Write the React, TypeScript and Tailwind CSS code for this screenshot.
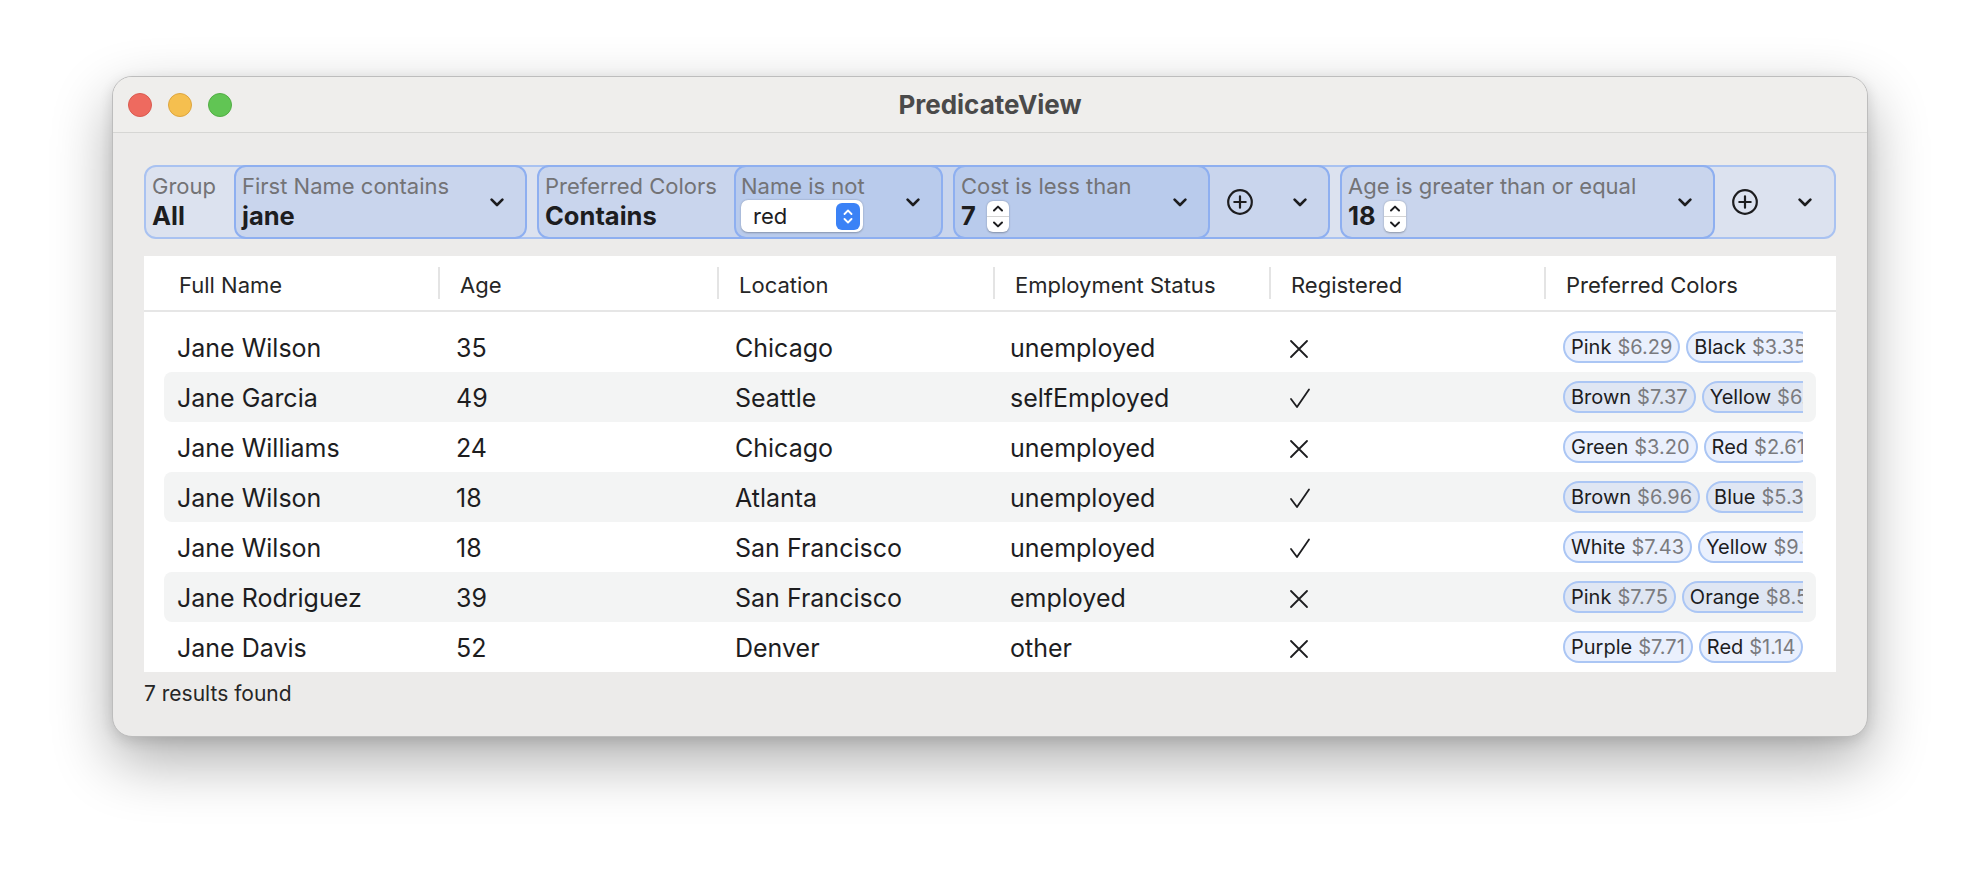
import React from "react";

const Chevron = () => (
  <svg width="14" height="9" viewBox="0 0 14 9" className="shrink-0">
    <path d="M1.6 1.6 L7 7 L12.4 1.6" fill="none" stroke="#1d1d1f" strokeWidth="2.6" strokeLinecap="round" strokeLinejoin="round" />
  </svg>
);

const PlusCircle = () => (
  <svg width="26" height="26" viewBox="0 0 26 26" className="shrink-0">
    <circle cx="13" cy="13" r="11.8" fill="none" stroke="#1d1d1f" strokeWidth="2.2" />
    <path d="M13 7.3 V18.7 M7.3 13 H18.7" stroke="#1d1d1f" strokeWidth="2.2" strokeLinecap="round" />
  </svg>
);

const Stepper = () => (
  <div className="flex h-[31px] w-[22px] shrink-0 flex-col items-center justify-between rounded-[6px] bg-white py-[4px] shadow-[0_0.5px_2px_rgba(0,0,0,0.3)]">
    <svg width="12" height="7" viewBox="0 0 12 7">
      <path d="M2 5.5 L6 1.6 L10 5.5" fill="none" stroke="#1d1d1f" strokeWidth="2" strokeLinecap="round" strokeLinejoin="round" />
    </svg>
    <div className="h-[1px] w-full bg-[#d4d4d4]" />
    <svg width="12" height="7" viewBox="0 0 12 7">
      <path d="M2 1.5 L6 5.4 L10 1.5" fill="none" stroke="#1d1d1f" strokeWidth="2" strokeLinecap="round" strokeLinejoin="round" />
    </svg>
  </div>
);

const Trailing = () => (
  <div className="flex w-[118px] shrink-0 items-center pl-[17px]">
    <PlusCircle />
    <div className="ml-[40px]">
      <Chevron />
    </div>
  </div>
);

const Label = ({ children }: { children: React.ReactNode }) => (
  <div className="whitespace-nowrap text-[22px] leading-[28px] text-[#737376]">{children}</div>
);

const Value = ({ children }: { children: React.ReactNode }) => (
  <div className="flex h-[32px] items-center whitespace-nowrap text-[25.5px] font-bold leading-[32px] text-[#1d1d1f]">{children}</div>
);

const XMark = () => (
  <svg width="20" height="20" viewBox="0 0 20 20">
    <path d="M2 2 L18 18 M18 2 L2 18" stroke="#1d1d1f" strokeWidth="1.8" strokeLinecap="round" />
  </svg>
);

const CheckMark = () => (
  <svg width="22" height="21" viewBox="0 0 22 21">
    <path d="M2 11 L8 19 L20 1.5" fill="none" stroke="#1d1d1f" strokeWidth="1.8" strokeLinecap="round" strokeLinejoin="round" />
  </svg>
);

type Row = {
  name: string;
  age: number;
  loc: string;
  status: string;
  reg: boolean;
  chips: [string, string][];
};

const rows: Row[] = [
  { name: "Jane Wilson", age: 35, loc: "Chicago", status: "unemployed", reg: false, chips: [["Pink", "$6.29"], ["Black", "$3.35"]] },
  { name: "Jane Garcia", age: 49, loc: "Seattle", status: "selfEmployed", reg: true, chips: [["Brown", "$7.37"], ["Yellow", "$6.12"]] },
  { name: "Jane Williams", age: 24, loc: "Chicago", status: "unemployed", reg: false, chips: [["Green", "$3.20"], ["Red", "$2.61"]] },
  { name: "Jane Wilson", age: 18, loc: "Atlanta", status: "unemployed", reg: true, chips: [["Brown", "$6.96"], ["Blue", "$5.31"]] },
  { name: "Jane Wilson", age: 18, loc: "San Francisco", status: "unemployed", reg: true, chips: [["White", "$7.43"], ["Yellow", "$9.14"]] },
  { name: "Jane Rodriguez", age: 39, loc: "San Francisco", status: "employed", reg: false, chips: [["Pink", "$7.75"], ["Orange", "$8.56"]] },
  { name: "Jane Davis", age: 52, loc: "Denver", status: "other", reg: false, chips: [["Purple", "$7.71"], ["Red", "$1.14"]] },
];

const Chip = ({ name, price }: { name: string; price: string }) => (
  <div className="flex h-[32px] shrink-0 items-center whitespace-nowrap rounded-full border-2 border-[#abc6f4] bg-[rgba(80,130,240,0.12)] px-[6px] text-[20px] leading-none">
    <span className="text-[#1d1d1f]">{name}</span>
    <span className="ml-[6px] text-[#7a7b7f]">{price}</span>
  </div>
);

const HeaderCell = ({ w, children }: { w: string; children: React.ReactNode }) => (
  <div className={`flex h-full shrink-0 items-center ${w}`}>
    <div className="h-[32px] w-[2px] bg-[#e4e4e4]" />
    <div className="ml-[20px] whitespace-nowrap pt-[4px]">{children}</div>
  </div>
);

export default function App() {
  return (
    <div className="h-[886px] w-[1980px] overflow-hidden bg-white pl-[112px] pt-[76px] font-[Inter,'Noto_Sans',sans-serif] text-[#1d1d1f]">
      <div className="flex h-[661px] w-[1756px] flex-col overflow-hidden rounded-[20px] border border-[#bdbdbd] bg-[#ecebea] shadow-[0_24px_60px_rgba(0,0,0,0.32),0_4px_14px_rgba(0,0,0,0.12)]">
        {/* Title bar */}
        <div className="grid h-[56px] shrink-0 grid-cols-[1fr_auto_1fr] items-center border-b border-[#d6d6d4] bg-[#efeeec]">
          <div className="flex items-center gap-[16px] pl-[15px]">
            <div className="h-[24px] w-[24px] rounded-full border border-[#d95a50] bg-[#ee6a5f]" />
            <div className="h-[24px] w-[24px] rounded-full border border-[#dda53f] bg-[#f5bf4f]" />
            <div className="h-[24px] w-[24px] rounded-full border border-[#52ad45] bg-[#61c554]" />
          </div>
          <div className="text-[26px] font-bold text-[#4a4a4a]">PredicateView</div>
          <div />
        </div>

        {/* Content */}
        <div className="flex flex-1 flex-col px-[31px] pt-[32px]">
          {/* Filter bar */}
          <div className="flex h-[74px] shrink-0 rounded-[12px] border-2 border-[#a9c2f1] bg-[#dce2ef]">
            <div className="flex w-[88px] shrink-0 flex-col justify-center pl-[6px]">
              <Label>Group</Label>
              <Value>All</Value>
            </div>

            <div className="-my-[2px] flex w-[293px] shrink-0 items-center rounded-[12px] border-2 border-[#8eaff0] bg-[#c9d5ed] pl-[6px] pr-[21px]">
              <div className="flex flex-1 flex-col justify-center">
                <Label>First Name contains</Label>
                <Value>jane</Value>
              </div>
              <Chevron />
            </div>

            <div className="-my-[2px] ml-[10px] flex w-[793px] shrink-0 rounded-[12px] border-2 border-[#8eaff0] bg-[#c9d5ed]">
              <div className="flex w-[195px] shrink-0 flex-col justify-center pl-[6px]">
                <Label>Preferred Colors</Label>
                <Value>Contains</Value>
              </div>

              <div className="-my-[2px] flex w-[209px] shrink-0 items-center rounded-[12px] border-2 border-[#8eaff0] bg-[#b9cbec] pl-[5px] pr-[21px]">
                <div className="flex flex-1 flex-col justify-center">
                  <Label>Name is not</Label>
                  <div className="flex h-[32px] w-[122px] items-center justify-between rounded-[7px] bg-white pl-[12px] pr-[3px] shadow-[0_0.5px_2px_rgba(0,0,0,0.28)]">
                    <span className="text-[22px] leading-none text-[#1d1d1f]">red</span>
                    <div className="flex h-[27px] w-[24px] flex-col items-center justify-center gap-[3px] rounded-[6px] bg-[#3b82f6]">
                      <svg width="10" height="6" viewBox="0 0 10 6">
                        <path d="M1.5 5 L5 1.5 L8.5 5" fill="none" stroke="white" strokeWidth="1.8" strokeLinecap="round" strokeLinejoin="round" />
                      </svg>
                      <svg width="10" height="6" viewBox="0 0 10 6">
                        <path d="M1.5 1 L5 4.5 L8.5 1" fill="none" stroke="white" strokeWidth="1.8" strokeLinecap="round" strokeLinejoin="round" />
                      </svg>
                    </div>
                  </div>
                </div>
                <Chevron />
              </div>

              <div className="-my-[2px] ml-[10px] flex w-[257px] shrink-0 items-center rounded-[12px] border-2 border-[#8eaff0] bg-[#b9cbec] pl-[6px] pr-[21px]">
                <div className="flex flex-1 flex-col justify-center">
                  <Label>Cost is less than</Label>
                  <Value>
                    <span>7</span>
                    <span className="ml-[11px]">
                      <Stepper />
                    </span>
                  </Value>
                </div>
                <Chevron />
              </div>

              <Trailing />
            </div>

            <div className="-my-[2px] ml-[10px] flex w-[375px] shrink-0 items-center rounded-[12px] border-2 border-[#8eaff0] bg-[#c9d5ed] pl-[6px] pr-[21px]">
              <div className="flex flex-1 flex-col justify-center">
                <Label>Age is greater than or equal</Label>
                <Value>
                  <span>18</span>
                  <span className="ml-[8px]">
                    <Stepper />
                  </span>
                </Value>
              </div>
              <Chevron />
            </div>

            <Trailing />
          </div>

          {/* Table */}
          <div className="mt-[17px] flex h-[416px] shrink-0 flex-col overflow-hidden bg-white">
            <div className="flex h-[56px] shrink-0 items-center border-b-2 border-[#e6e6e6] text-[22px] text-[#262626]">
              <div className="flex h-full w-[294px] shrink-0 items-center pl-[35px] pt-[4px]">Full Name</div>
              <HeaderCell w="w-[279px]">Age</HeaderCell>
              <HeaderCell w="w-[276px]">Location</HeaderCell>
              <HeaderCell w="w-[276px]">Employment Status</HeaderCell>
              <HeaderCell w="w-[275px]">Registered</HeaderCell>
              <HeaderCell w="w-[200px]">Preferred Colors</HeaderCell>
            </div>
            <div className="flex flex-col px-[20px] pt-[10px]">
              {rows.map((r, i) => (
                <div
                  key={i}
                  className={`grid h-[50px] grid-cols-[279px_279px_275px_276px_277px_240px] items-center rounded-[8px] px-[13px] pt-[3px] text-[25px] text-[#1d1d1f] ${i % 2 === 1 ? "bg-[#f3f4f4]" : ""}`}
                >
                  <div className="whitespace-nowrap">{r.name}</div>
                  <div>{r.age}</div>
                  <div className="whitespace-nowrap">{r.loc}</div>
                  <div className="whitespace-nowrap">{r.status}</div>
                  <div className="flex items-center pl-[3px]">{r.reg ? <CheckMark /> : <XMark />}</div>
                  <div className="-mt-[3px] flex gap-[6px] overflow-hidden">
                    {r.chips.map((c, j) => (
                      <Chip key={j} name={c[0]} price={c[1]} />
                    ))}
                  </div>
                </div>
              ))}
            </div>
          </div>

          <div className="mt-[11px] text-[21px] leading-[22px] text-[#262626]">7 results found</div>
        </div>
      </div>
    </div>
  );
}
